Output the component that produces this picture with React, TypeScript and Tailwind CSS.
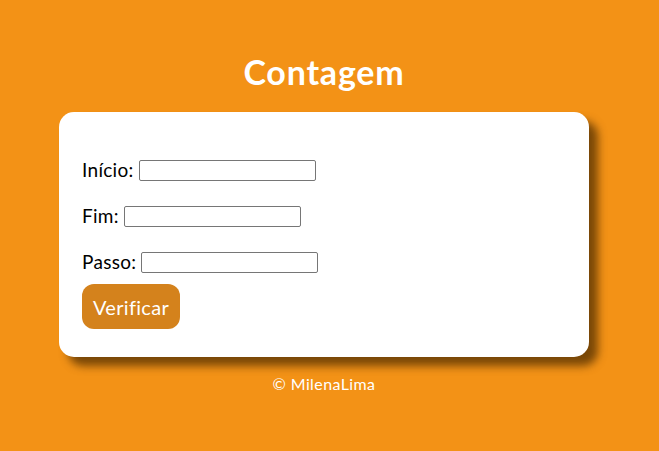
export default function App() {
  const rows = [
    { label: 'Início:', id: 'inicio' },
    { label: 'Fim:', id: 'fim' },
    { label: 'Passo:', id: 'passo' },
  ]

  return (
    <div className="min-h-[451px] w-full bg-[#f39216] font-['Lato','Noto_Sans',sans-serif] text-white">
      <div className="ml-[59px] w-[530px] pt-[52px]">
        <h1 className="h-[40px] text-center text-[34px] font-bold leading-[40px] tracking-[0.8px]">Contagem</h1>

        <div className="mt-[20px] rounded-[15px] bg-white px-[23px] pt-[45px] pb-[28px] text-black shadow-[9px_9px_8px_rgba(70,40,0,0.7)]">
          <div className="flex flex-col gap-[19px]">
            {rows.map(r => (
              <div key={r.id} className="flex h-[27px] items-center text-[19px] tracking-[0.3px]">
                <label htmlFor={r.id}>{r.label}</label>
                <input
                  id={r.id}
                  type="text"
                  className="ml-[5px] h-[21px] w-[177px] rounded-[2px] border border-[#767676] bg-white px-[2px] text-[13px]"
                />
              </div>
            ))}
          </div>
          <button className="mt-[8px] h-[45px] w-[98px] rounded-[12px] bg-[#d4821c] text-[20px] tracking-[0.3px] text-white">
            Verificar
          </button>
        </div>

        <div className="mt-[15px] text-center text-[16px] tracking-[0.4px]">© MilenaLima</div>
      </div>
    </div>
  )
}
